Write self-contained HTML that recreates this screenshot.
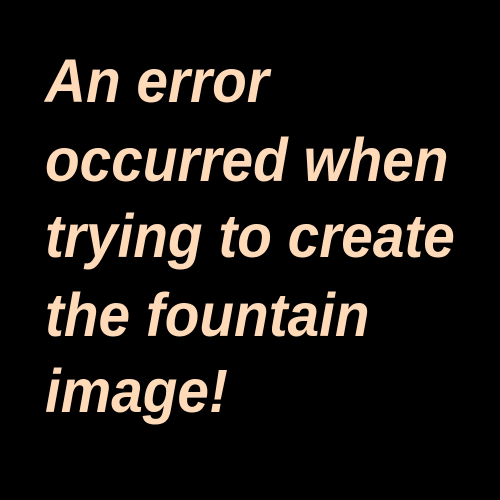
<!DOCTYPE html>
<html><head><style>
html,body{margin:0;padding:0;background:#000;width:500px;height:500px;overflow:hidden}
.l{position:absolute;left:45px;font-family:"Liberation Sans",sans-serif;font-weight:bold;font-style:italic;font-size:61px;color:#FFDAB9;white-space:nowrap;transform:scaleX(0.93);transform-origin:left top;line-height:1}
</style></head><body>
<div class="l" style="top:51px">An error</div>
<div class="l" style="top:130px">occurred when</div>
<div class="l" style="top:206px">trying to create</div>
<div class="l" style="top:285px">the fountain</div>
<div class="l" style="top:361px">image!</div>
</body></html>
